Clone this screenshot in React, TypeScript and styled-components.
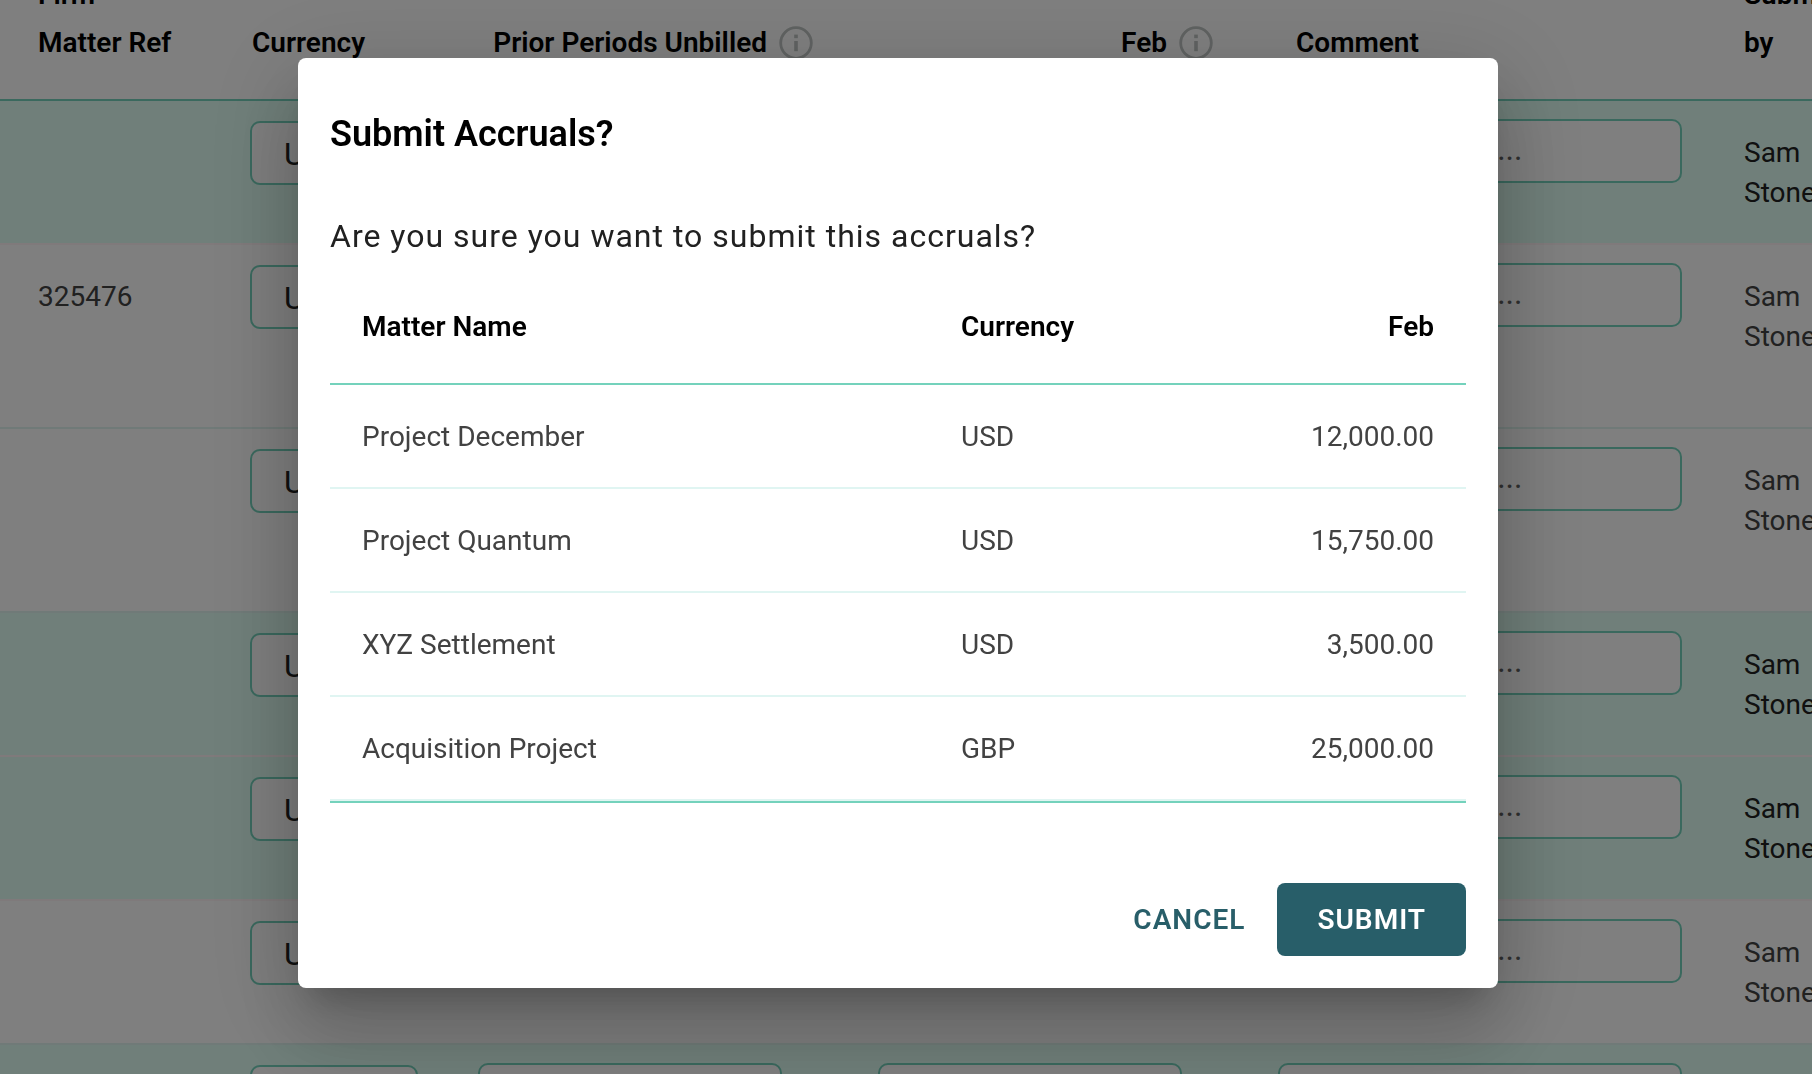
import React from "react";
import styled, { createGlobalStyle } from "styled-components";

const GlobalStyle = createGlobalStyle`
  *, *::before, *::after { box-sizing: border-box; }
  html, body { margin: 0; }
  body {
    overflow: hidden;
    background: #ffffff;
    color: #212121;
    font-family: Roboto, "Liberation Sans", sans-serif;
    font-size: 28px;
    line-height: 40px;
  }
`;

const Page = styled.main`
  height: 100vh;
  overflow: hidden;
`;

const AccrualsTable = styled.table`
  width: 100%;
  min-width: 1872px;
  margin-top: -68px;
  border-collapse: separate;
  border-spacing: 0;
  table-layout: fixed;
`;

const Col = styled.col<{ $width?: number }>`
  width: ${({ $width }) => ($width ? `${$width}px` : "auto")};
`;

const HeadCell = styled.th<{ $left?: number; $numeric?: boolean }>`
  padding: 39px ${({ $numeric }) => ($numeric ? 65 : 0)}px 32px ${({ $left }) => $left ?? 0}px;
  border-bottom: 2px solid #74d2bc;
  color: #000000;
  font-weight: 600;
  line-height: 48px;
  text-align: ${({ $numeric }) => ($numeric ? "right" : "left")};
  vertical-align: bottom;
`;

const HeadLabel = styled.span`
  display: inline-flex;
  align-items: center;
  gap: 12px;
  vertical-align: top;
  white-space: nowrap;
`;

const Row = styled.tr<{ $highlight: boolean; $tall: boolean }>`
  height: ${({ $tall }) => ($tall ? 184 : 144)}px;
  background: ${({ $highlight }) => ($highlight ? "#e0fff4" : "#ffffff")};
  color: ${({ $highlight }) => ($highlight ? "#212121" : "#424242")};

  > td {
    border-bottom: 2px solid ${({ $highlight }) => ($highlight ? "#fff5f7" : "#e0f5f0")};
  }
`;

const Cell = styled.td<{ $left?: number }>`
  padding: 32px 0 0 ${({ $left }) => $left ?? 0}px;
  vertical-align: top;
`;

const FieldCell = styled.td<{ $top?: number }>`
  padding: ${({ $top }) => $top ?? 18}px 0 0;
  vertical-align: top;
`;

const CurrencySelect = styled.select`
  display: block;
  width: 168px;
  height: 64px;
  padding: 2px 32px 0;
  border: 2px solid #74d2bc;
  border-radius: 10px;
  appearance: none;
  background: #ffffff;
  color: #212121;
  font: inherit;
  font-size: 32px;
`;

const Field = styled.input<{ $width: number }>`
  display: block;
  width: ${({ $width }) => $width}px;
  height: 64px;
  padding: 0 16px 4px;
  border: 2px solid #74d2bc;
  border-radius: 10px;
  background: #ffffff;
  color: #212121;
  font: inherit;
  font-size: 32px;

  &::placeholder {
    color: #616161;
    opacity: 1;
  }
`;

const Backdrop = styled.div`
  position: fixed;
  inset: 0;
  display: flex;
  align-items: center;
  justify-content: center;
  padding: 16px 16px 44px 0;
  background: rgba(0, 0, 0, 0.5);
`;

const Dialog = styled.section`
  width: 1200px;
  max-width: calc(100% - 64px);
  padding: 52px 32px 32px;
  border-radius: 8px;
  background: #ffffff;
  box-shadow:
    0 22px 30px -14px rgba(0, 0, 0, 0.2),
    0 48px 76px 6px rgba(0, 0, 0, 0.14),
    0 18px 92px 16px rgba(0, 0, 0, 0.12);
`;

const Title = styled.h2`
  margin: 0 0 58px;
  color: #000000;
  font-size: 36px;
  font-weight: 600;
  line-height: 48px;
`;

const Question = styled.p`
  margin: 0 0 12px;
  font-size: 32px;
  letter-spacing: 1px;
`;

const SummaryTable = styled.table`
  width: 100%;
  border-bottom: 2px solid #74d2bc;
  border-collapse: separate;
  border-spacing: 0;
  table-layout: fixed;
`;

const SummaryHead = styled.th<{ $numeric?: boolean }>`
  padding: 35px 32px 32px;
  border-bottom: 2px solid #74d2bc;
  color: #000000;
  font-weight: 600;
  line-height: 48px;
  text-align: ${({ $numeric }) => ($numeric ? "right" : "left")};
`;

const SummaryCell = styled.td<{ $numeric?: boolean }>`
  padding: 32px 32px 30px;
  border-bottom: 2px solid #e0f5f2;
  color: #424242;
  text-align: ${({ $numeric }) => ($numeric ? "right" : "left")};
`;

const Actions = styled.footer`
  display: flex;
  justify-content: flex-end;
  gap: 32px;
  margin-top: 80px;
`;

const Button = styled.button<{ $primary?: boolean }>`
  height: 73px;
  padding: 0 ${({ $primary }) => ($primary ? 40 : 0)}px;
  border: 0;
  border-radius: 8px;
  background: ${({ $primary }) => ($primary ? "#285e69" : "transparent")};
  color: ${({ $primary }) => ($primary ? "#ffffff" : "#285e69")};
  font: inherit;
  font-weight: 600;
  letter-spacing: 1px;
  text-transform: uppercase;
  cursor: pointer;
`;

const InfoIcon = () => (
  <svg width="34" height="34" viewBox="0 0 34 34" fill="none" aria-hidden="true">
    <circle cx="17" cy="17" r="15.3" stroke="#c0c5c4" strokeWidth="2.8" />
    <rect x="15.2" y="8.6" width="3.6" height="3.6" fill="#c0c5c4" />
    <rect x="15.2" y="15" width="3.6" height="10.2" fill="#c0c5c4" />
  </svg>
);

type Accrual = { id: number; reference: string; highlight: boolean; tall: boolean };

const accruals: Accrual[] = [
  { id: 1, reference: "", highlight: true, tall: false },
  { id: 2, reference: "325476", highlight: false, tall: true },
  { id: 3, reference: "", highlight: false, tall: true },
  { id: 4, reference: "", highlight: true, tall: false },
  { id: 5, reference: "", highlight: true, tall: false },
  { id: 6, reference: "", highlight: false, tall: false },
  { id: 7, reference: "", highlight: true, tall: false },
];

const summary = [
  { name: "Project December", currency: "USD", amount: "12,000.00" },
  { name: "Project Quantum", currency: "USD", amount: "15,750.00" },
  { name: "XYZ Settlement", currency: "USD", amount: "3,500.00" },
  { name: "Acquisition Project", currency: "GBP", amount: "25,000.00" },
];

export default function App() {
  return (
    <>
      <GlobalStyle />
      <Page>
        <AccrualsTable>
          <colgroup>
            <Col $width={250} />
            <Col $width={228} />
            <Col $width={400} />
            <Col $width={400} />
            <Col $width={466} />
            <Col />
          </colgroup>
          <thead>
            <tr>
              <HeadCell $left={38}>
                Firm
                <br />
                Matter Ref
              </HeadCell>
              <HeadCell $left={2}>Currency</HeadCell>
              <HeadCell $numeric>
                <HeadLabel>
                  Prior Periods Unbilled <InfoIcon />
                </HeadLabel>
              </HeadCell>
              <HeadCell $numeric>
                <HeadLabel>
                  Feb <InfoIcon />
                </HeadLabel>
              </HeadCell>
              <HeadCell $left={18}>Comment</HeadCell>
              <HeadCell>Submitted by</HeadCell>
            </tr>
          </thead>
          <tbody>
            {accruals.map(({ id, reference, highlight, tall }) => (
              <Row key={id} $highlight={highlight} $tall={tall}>
                <Cell $left={38}>{reference}</Cell>
                <FieldCell $top={20}>
                  <CurrencySelect aria-label="Currency" defaultValue="USD">
                    <option>USD</option>
                    <option>GBP</option>
                  </CurrencySelect>
                </FieldCell>
                <FieldCell>
                  <Field $width={304} aria-label="Prior periods unbilled" />
                </FieldCell>
                <FieldCell>
                  <Field $width={304} aria-label="Feb" />
                </FieldCell>
                <FieldCell>
                  <Field $width={404} aria-label="Comment" placeholder="Add comment..." />
                </FieldCell>
                <Cell>Sam Stone</Cell>
              </Row>
            ))}
          </tbody>
        </AccrualsTable>
      </Page>
      <Backdrop>
        <Dialog role="dialog" aria-modal="true" aria-labelledby="submit-title">
          <Title id="submit-title">Submit Accruals?</Title>
          <Question>Are you sure you want to submit this accruals?</Question>
          <SummaryTable>
            <colgroup>
              <Col />
              <Col $width={268} />
              <Col $width={269} />
            </colgroup>
            <thead>
              <tr>
                <SummaryHead>Matter Name</SummaryHead>
                <SummaryHead>Currency</SummaryHead>
                <SummaryHead $numeric>Feb</SummaryHead>
              </tr>
            </thead>
            <tbody>
              {summary.map(({ name, currency, amount }) => (
                <tr key={name}>
                  <SummaryCell>{name}</SummaryCell>
                  <SummaryCell>{currency}</SummaryCell>
                  <SummaryCell $numeric>{amount}</SummaryCell>
                </tr>
              ))}
            </tbody>
          </SummaryTable>
          <Actions>
            <Button type="button">Cancel</Button>
            <Button type="button" $primary>
              Submit
            </Button>
          </Actions>
        </Dialog>
      </Backdrop>
    </>
  );
}
